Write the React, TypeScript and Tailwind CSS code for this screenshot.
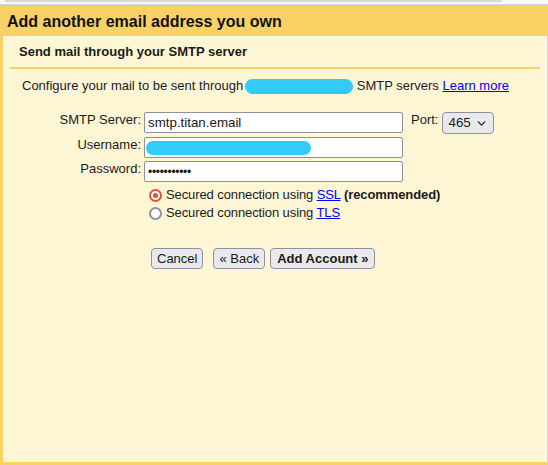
import React from "react";
import { ChevronDown } from "lucide-react";

function Radio({ checked }: { checked: boolean }) {
  if (checked) {
    return (
      <span className="w-[13px] h-[13px] rounded-full border-[2px] border-[#e0552f] bg-white flex items-center justify-center flex-none">
        <span className="w-[5px] h-[5px] rounded-full bg-[#e0552f]" />
      </span>
    );
  }
  return <span className="w-[13px] h-[13px] rounded-full border-[2px] border-[#8f8f9d] bg-white flex-none" />;
}

export default function App() {
  return (
    <div className="w-[548px] h-[465px] bg-white font-['Liberation_Sans',Arial,sans-serif] text-[13px] text-[#1a1a1a] flex flex-col overflow-hidden">
      <div className="h-[5px] flex-none bg-[#f7f7f7] border-b border-[#d6d6d6] relative">
        <div className="absolute left-[5px] top-0 w-[497px] h-[2px] bg-[#d9d9d9] rounded-br-[2px]" />
      </div>
      <div className="flex-1 bg-[#fad165] flex flex-col pl-[3px] pr-[1px] pb-[3px]">
        <div className="h-[31px] flex-none pl-[4px] pt-[7px] text-[16px] leading-[20px] font-bold text-[#111]">
          Add another email address you own
        </div>
        <div className="flex-1 bg-[#fff6d6] border-l border-r border-[#fffcf2] flex flex-col">
          <div className="mx-[6px] pl-[9px] pt-[8px] pb-[7px] leading-[16px] font-bold border-b-2 border-[#fad165]">
            Send mail through your SMTP server
          </div>
          <div className="pl-[18px] mt-[9px] leading-[16px] whitespace-nowrap">
            Configure your mail to be sent through{" "}
            <span className="inline-block relative w-[110px] h-[10px] align-baseline">
              <span className="absolute left-[-2px] top-[-1px] w-[108px] h-[15px] rounded-[8px] bg-[#33ccfa]" />
            </span>
            SMTP servers{" "}
            <a className="text-[#0000ee] underline" href="#">Learn more</a>
          </div>

          <div className="mt-[18px] flex flex-col gap-[3px]">
            <div className="flex items-start">
              <div className="w-[137px] text-right leading-[15px]">SMTP Server:</div>
              <div className="ml-[3px] w-[259px] h-[21px] border border-[#8f8f9d] rounded-[2px] bg-white flex items-center pl-[3px] text-[13.33px]">
                smtp.titan.email
              </div>
              <div className="ml-[8px] leading-[15px]">Port:</div>
              <div className="ml-[4px] w-[52px] h-[22px] border border-[#8f8f9d] rounded-[4px] bg-[#e9e9ed] flex items-center pl-[5px] pr-[5px] justify-between text-[13.33px]">
                <span>465</span>
                <ChevronDown size={13} strokeWidth={2.5} className="text-[#222]" />
              </div>
            </div>
            <div className="flex items-start">
              <div className="w-[137px] text-right leading-[15px]">Username:</div>
              <div className="ml-[3px] w-[259px] h-[21px] border border-[#8f8f9d] rounded-[2px] bg-white relative">
                <span className="absolute left-[1px] top-[3px] w-[165px] h-[14px] rounded-[7px] bg-[#33ccfa]" />
              </div>
            </div>
            <div className="flex items-start">
              <div className="w-[137px] text-right leading-[15px]">Password:</div>
              <div className="ml-[3px] w-[259px] h-[21px] border border-[#8f8f9d] rounded-[2px] bg-white flex items-center pl-[3px] text-[12px] tracking-[-0.3px]">
                •••••••••••
              </div>
            </div>
          </div>

          <div className="mt-[4px] ml-[145px] flex flex-col">
            <div className="h-[18px] flex items-center gap-[4px] leading-[18px] tracking-[-0.1px]">
              <Radio checked />
              <span>
                Secured connection using{" "}
                <a className="text-[#0000ee] underline" href="#">SSL</a>{" "}
                <b>(recommended)</b>
              </span>
            </div>
            <div className="h-[18px] flex items-center gap-[4px] leading-[18px] tracking-[-0.1px]">
              <Radio checked={false} />
              <span>
                Secured connection using{" "}
                <a className="text-[#0000ee] underline" href="#">TLS</a>
              </span>
            </div>
          </div>

          <div className="mt-[26px] ml-[147px] flex items-center">
            <button className="h-[21px] px-[5px] border border-[#8f8f9d] rounded-[4px] bg-[#e9e9ed] text-[13px] leading-[15px]">
              Cancel
            </button>
            <button className="ml-[10px] h-[21px] px-[5px] border border-[#8f8f9d] rounded-[4px] bg-[#e9e9ed] text-[13px] leading-[15px]">
              « Back
            </button>
            <button className="ml-[5px] h-[21px] px-[6px] border border-[#8f8f9d] rounded-[4px] bg-[#e9e9ed] text-[13px] leading-[15px] font-bold">
              Add Account »
            </button>
          </div>
        </div>
      </div>
    </div>
  );
}
